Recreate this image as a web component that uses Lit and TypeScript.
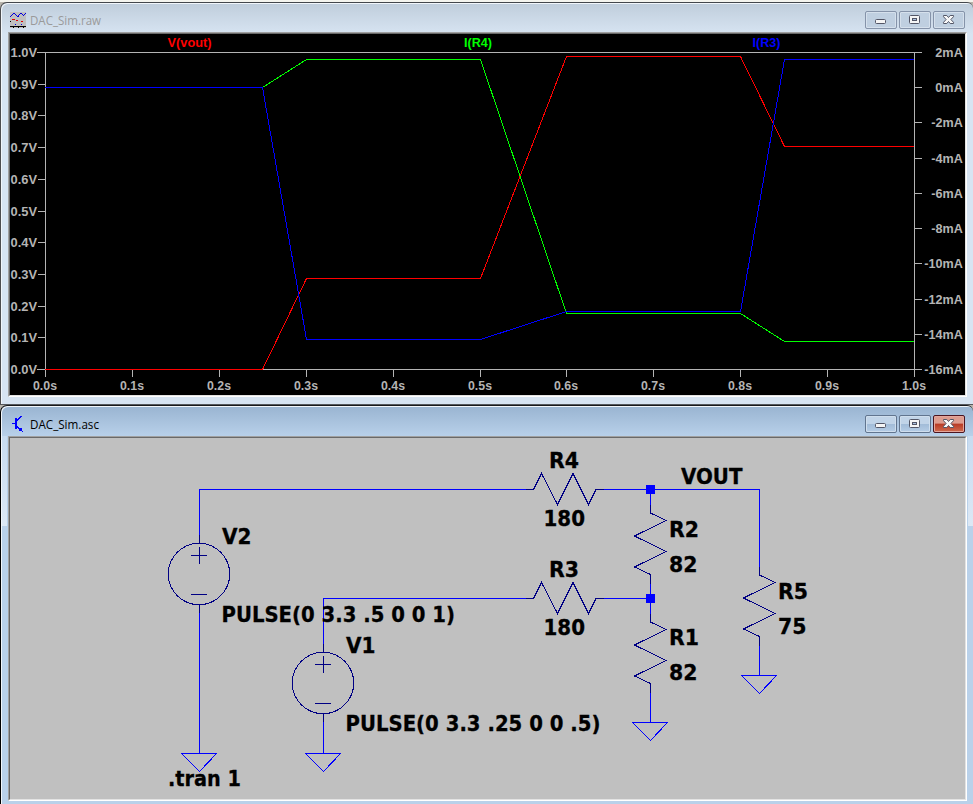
import { LitElement, html, svg, css } from "lit";
import { customElement } from "lit/decorators.js";

// [text, x, baseline, width]
type Label = [string, number, number, number];

const label = ([text, x, y, w]: Label, cls: string) => svg`<text
  class=${cls} x=${x} y=${y} textLength=${w} lengthAdjust="spacingAndGlyphs">${text}</text>`;

@customElement("mdi-window")
export class MdiWindow extends LitElement {
  static properties = { caption: {}, active: { type: Boolean, reflect: true } };
  declare caption: string;
  declare active: boolean;

  static styles = css`
    :host {
      display: flex;
      flex-direction: column;
      box-sizing: border-box;
      overflow: hidden;
      border-left: 1px solid #4d4d4f;
      border-top: 1px solid #43474c;
      border-radius: 7px 6px 0 0;
      padding: 0 6px 0 7px;
      box-shadow: inset 1px 1px 0 #f1f6fb;
    }
    :host([active]) {
      border-left-color: #000;
      border-top-color: #26282b;
      background:
        linear-gradient(#c7dbf0, #dce8f5) 1px 30px / 5px 90px no-repeat,
        linear-gradient(#c7dbf0, #dce8f5) right 30px / 5px 90px no-repeat,
        linear-gradient(#99b4d1, #b9d1ea 31px);
    }
    :host(:not([active])) {
      background: linear-gradient(#bfcddb, #d7e4f2 31px);
    }
    .bar {
      height: 29px;
      flex: none;
      display: flex;
      align-items: center;
      box-sizing: border-box;
      padding: 5px 2px 0 0;
    }
    :host([active]) .bar {
      height: 30px;
      padding-top: 6px;
    }
    .icon {
      width: 18px;
      height: 18px;
      margin-left: 1px;
    }
    .title {
      flex: 1;
      margin-left: 3px;
    }
    .title svg {
      display: block;
      width: 110px;
      height: 20px;
    }
    .title text {
      font: 12px "Open Sans", "Noto Sans", sans-serif;
      fill: #9a9a9a;
    }
    :host([active]) .title text {
      fill: #000;
    }
    .buttons {
      display: flex;
      gap: 2px;
    }
    .btn {
      width: 32px;
      height: 18px;
      box-sizing: border-box;
      border: 1px solid #8593a9;
      border-radius: 2px;
      box-shadow: inset 0 0 0 1px #d5e0ec;
      background: #bfcfe0;
    }
    :host([active]) .btn {
      border-color: #61758f;
      box-shadow: inset 0 0 0 1px #cfdeed;
      background: linear-gradient(#c1d4e8 48%, #a2bcd8 52%, #b5cde6);
    }
    :host([active]) .close {
      border-color: #4b1520;
      box-shadow: inset 0 0 0 1px #e3a69c;
      background: linear-gradient(#dd9c8f 45%, #b83a25 50%, #d06c50);
    }
    .btn svg {
      display: block;
      width: 30px;
      height: 16px;
    }
    .frame {
      flex: 1;
      min-height: 0;
      border: 1px solid;
      border-color: #a0a0a0 #fff #fff #a0a0a0;
    }
    .inner {
      height: 100%;
      box-sizing: border-box;
      border: 1px solid;
      border-color: #696969 #e3e3e3 #e3e3e3 #696969;
      overflow: hidden;
    }
  `;

  render() {
    return html`
      <div class="bar">
        <div class="icon"><slot name="icon"></slot></div>
        <div class="title">
          <svg viewBox="0 0 110 20">
            <text x="0" y="15" textLength=${this.active ? 69 : 71} lengthAdjust="spacingAndGlyphs">${this.caption}</text>
          </svg>
        </div>
        <div class="buttons">
          <div class="btn"><svg viewBox="0 0 30 16">
            <rect x="9.5" y="7.5" width="10" height="4" rx="1" fill="#f5f5f5" stroke="#535666" />
          </svg></div>
          <div class="btn"><svg viewBox="0 0 30 16">
            <rect x="9.5" y="3.5" width="10" height="8" rx="1" fill="#f5f5f5" stroke="#535666" />
            <rect x="12.5" y="6.5" width="4" height="2" fill="#a9bfdf" stroke="#535666" />
          </svg></div>
          <div class="btn close"><svg viewBox="0 0 30 16">
            <path d="M9.5 3.5h3.3l1.7 2 1.7-2h3.3v1.2l-2.6 2.8 2.6 2.8v1.2h-3.3l-1.7-2-1.7 2h-3.3v-1.2l2.6-2.8-2.6-2.8z"
              fill="#f8f8f8" stroke="#535666" />
          </svg></div>
        </div>
      </div>
      <div class="frame"><div class="inner"><slot></slot></div></div>
    `;
  }
}

@customElement("wave-plot")
export class WavePlot extends LitElement {
  static styles = css`
    :host { display: block; background: #000; height: 100%; }
    svg { display: block; width: 955px; height: 361px; }
    .axis { stroke: #b4b4b4; fill: none; shape-rendering: crispEdges; }
    .trace { fill: none; shape-rendering: crispEdges; }
    .red { stroke: #f00; }
    .green { stroke: #0f0; }
    .blue { stroke: #00f; }
    text { font: bold 13px "Liberation Sans", Arial, sans-serif; }
    .tick { fill: #b4b4b4; }
    .lred { fill: #f00; }
    .lgreen { fill: #0f0; }
    .lblue { fill: #00f; }
  `;

  render() {
    const tenths = Array.from({ length: 11 }, (_, i) => i);
    const amps = Array.from({ length: 10 }, (_, i) => i);
    return html`<svg viewBox="10 34 955 361">
      <path class="axis" d="M37 52.5H922M45.5 52V377M914.5 52V377M37 369.5H922" />
      ${tenths.map((i) => {
        const y = Math.round(52 + i * 31.7);
        const x = Math.round(45 + i * 86.9);
        return svg`
          <path class="axis" d="M38 ${y + 0.5}H46M${x + 0.5} 369V377" />
          ${label([(1 - i / 10).toFixed(1) + "V", 10.5, y + 5, 26.5], "tick")}
          ${label([(i / 10).toFixed(1) + "s", x - 12, 390, 24], "tick")}`;
      })}
      ${amps.map((i) => {
        const y = Math.round(52 + i * 35.22);
        const t = `${2 - i * 2}mA`;
        const w = t.length === 3 ? 27.5 : t.length === 4 ? 31.5 : 38.5;
        return svg`
          <path class="axis" d="M914 ${y + 0.5}H922" />
          ${label([t, 962.8 - w, y + 5, w], "tick")}`;
      })}
      ${label(["V(vout)", 167.5, 47, 44], "lred")}
      ${label(["I(R4)", 464, 47, 28], "lgreen")}
      ${label(["I(R3)", 752.5, 47, 28], "lblue")}
      <path class="trace red" d="M45 369.5H262.5L306.5 278.5H480.5L566.5 56.5H740.5L784.5 146.5H914" />
      <path class="trace green" d="M45 87.5H262.5L306.5 59.5H480.5L566.5 313.5H740.5L784.5 341.5H914" />
      <path class="trace blue" d="M45 87.5H262.5L306.5 339.5H480.5L566.5 311.5H740.5L784.5 59.5H914" />
    </svg>`;
  }
}

@customElement("schematic-view")
export class SchematicView extends LitElement {
  static styles = css`
    :host { display: block; background: #c0c0c0; height: 100%; }
    svg { display: block; width: 955px; height: 361px; }
    .wire { stroke: #00f; fill: none; shape-rendering: crispEdges; }
    .part { stroke: #000084; fill: none; shape-rendering: crispEdges; }
    .node { fill: #00f; }
    .name {
      font: bold 21.5px "DejaVu Sans", Verdana, sans-serif;
      fill: #000;
      stroke: #000;
      stroke-width: 0.3px;
    }
  `;

  render() {
    const grounds = [[199, 753], [323, 753], [650, 722], [759, 675]];
    const sources = [[199, 574], [323, 683]];
    const hRes = [489, 598];
    const vRes = [[650, 513], [650, 622], [759, 575]];
    const names: Label[] = [
      ["R4", 549, 468, 30],
      ["180", 543.5, 526, 41.5],
      ["R3", 549, 577, 30],
      ["180", 543.5, 635, 41.5],
      ["VOUT", 681, 484, 61.5],
      ["R2", 669, 537, 30],
      ["82", 669, 572, 28.5],
      ["R1", 669, 645, 30],
      ["82", 669, 680, 28.5],
      ["R5", 778, 599, 30],
      ["75", 778, 634, 28.5],
      ["V2", 222, 544, 29.5],
      ["PULSE(0 3.3 .5 0 0 1)", 221.5, 622, 233.5],
      ["V1", 346, 653, 29.5],
      ["PULSE(0 3.3 .25 0 0 .5)", 345.5, 731, 255],
      [".tran 1", 168, 786, 73],
    ];
    return html`<svg viewBox="10 438 955 361">
      <path class="wire" d="M199.5 536V489.5H527M199.5 612V753M323.5 645V598.5H527M323.5 721V753
        M603 489.5H759.5V567M650.5 489V505M603 598.5H650M650.5 582V614M650.5 692V722M759.5 645V675" />
      ${grounds.map(([x, y]) => svg`<path class="wire" d="M${x - 17.5} ${y + 0.5}H${x + 17.5}L${x + 0.5} ${y + 18.5}Z" />`)}
      ${sources.map(([x, y]) => svg`
        <circle class="part" cx=${x} cy=${y} r="30.7" />
        <path class="part" d="M${x + 0.5} ${y - 39}v9M${x + 0.5} ${y + 30}v9M${x - 8} ${y - 18.5}h16M${x + 0.5} ${y - 27}v17M${x - 8} ${y + 20.5}h16" />`)}
      ${hRes.map((y) => svg`<path class="part" d="M526 ${y + 0.5}H533.5l8 -16 16 31 15.5 -31 15.5 31 7.5 -15H604" />`)}
      ${vRes.map(([x, y]) => svg`<path class="part" d="M${x + 0.5} ${y - 8}V${y}l15.5 7.5 -31.5 15.5 31.5 15.5 -31.5 15.5 16 7.5v9" />`)}
      <rect class="node" x="646" y="485" width="9" height="9" />
      <rect class="node" x="646" y="594" width="9" height="9" />
      ${names.map((n) => label(n, "name"))}
    </svg>`;
  }
}

@customElement("app-root")
export class AppRoot extends LitElement {
  static styles = css`
    :host {
      display: flex;
      flex-direction: column;
      width: 973px;
      height: 804px;
      box-sizing: border-box;
      padding-top: 2px;
      background: linear-gradient(#f4f4ee 2px, #b8b4ac 2px);
      overflow: hidden;
    }
    .raw { height: 403px; padding-bottom: 7px; border-bottom: 1px solid #55585c; }
    .asc { height: 399px; padding-bottom: 3px; border-top: 1px solid #17191c; }
    .icon { display: block; width: 18px; height: 18px; shape-rendering: crispEdges; }
  `;

  render() {
    return html`
      <mdi-window class="raw" caption="DAC_Sim.raw">
        <svg slot="icon" class="icon" viewBox="9 11 18 18">
          <rect x="10" y="12" width="16" height="16" fill="#c0c0c0" />
          <path d="M10 16.5h1M11 15.5h1M12 14.5h1M13 13.5h2M15 14.5h1M16 15.5h1M17 16.5h2M18 15.5h1M19 14.5h1M20 13.5h2M22 14.5h1M23 15.5h1M24 14.5h1M25 13.500h1M15 24.5h1M21 24.5h1" stroke="#0000e0" />
          <path d="M12 19.5h3M16 20.5h2M21 21.5h2" stroke="#e00000" />
          <path d="M10 21.5h1M10 26.5h16M13 27.5h1M18 27.5h1M23 27.5h1" stroke="#000" />
        </svg>
        <wave-plot></wave-plot>
      </mdi-window>
      <mdi-window class="asc" caption="DAC_Sim.asc" active>
        <svg slot="icon" class="icon" viewBox="9 415 18 18">
          <path d="M12 423.5h4M21.5 416L16 421.5M16 425.5L21.5 431" stroke="#00f" fill="none" />
          <path d="M15 418h2v11h-2zM19 430h3v1h1v1h-1v-1h-3zM20 428h2v3h-2z" fill="#00f" />
        </svg>
        <schematic-view></schematic-view>
      </mdi-window>
    `;
  }
}
